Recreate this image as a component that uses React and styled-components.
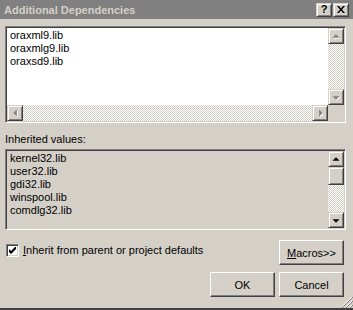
import styled, { createGlobalStyle, css } from "styled-components";

const Global = createGlobalStyle`
  html, body { margin: 0; padding: 0; background: #d4d0c8; }
  body { font-family: "Liberation Sans", Arial, sans-serif; font-size: 11px; color: #000; }
`;

const raised = css`
  box-sizing: border-box;
  border: 1px solid;
  border-color: #d4d0c8 #404040 #404040 #d4d0c8;
  box-shadow: inset 1px 1px #fff, inset -1px -1px #808080;
  background: #d4d0c8;
`;

const sunken = css`
  box-sizing: border-box;
  border: 1px solid;
  border-color: #808080 #fff #fff #808080;
  box-shadow: inset 1px 1px #404040, inset -1px -1px #d4d0c8;
`;

const Dialog = styled.div`
  width: 353px; height: 310px; box-sizing: border-box;
  display: flex; flex-direction: column;
  background: #d4d0c8; position: relative;
  border-bottom: 2px solid #404040;
`;

const TitleBar = styled.div`
  height: 19px; flex: none; background: #808080;
  display: flex; align-items: center; gap: 1px;
  padding: 0 4px 0 4px;
`;

const Title = styled.div`
  flex: 1; font-weight: bold; color: #d4d0c8; font-size: 11px;
`;

const CapBtn = styled.div`
  ${raised};
  width: 16px; height: 14px;
  display: flex; align-items: center; justify-content: center;
  font-weight: bold; font-size: 11px; line-height: 1;
`;

const Body = styled.div`
  flex: 1; display: flex; flex-direction: column;
  padding: 7px 7px 0 5px;
`;

const ListBox = styled.div`
  ${sunken};
  height: ${(p) => p.$h}px; padding: 1px;
  background: ${(p) => (p.$disabled ? "#d4d0c8" : "#fff")};
  display: grid;
  grid-template-columns: 1fr 16px;
  grid-template-rows: ${(p) => (p.$hscroll ? "1fr 16px" : "1fr")};
`;

const Lines = styled.div`
  padding: 1px 3px; line-height: 13px; overflow: hidden;
`;

const VScroll = styled.div`
  display: flex; flex-direction: column;
`;

const HScroll = styled.div`
  display: flex;
`;

const Track = styled.div`
  flex: 1;
  background: repeating-conic-gradient(#fff 0 25%, #d4d0c8 0 50%) 0 0 / 2px 2px;
`;

const ArrowBtn = styled.div`
  ${raised};
  width: 16px; height: 16px; flex: none;
  display: flex; align-items: center; justify-content: center;
`;

const Thumb = styled.div`
  ${raised};
  height: 18px; flex: none;
`;

const Corner = styled.div`
  background: #d4d0c8;
`;

const Label = styled.div`
  margin: 10px 0 3px; line-height: 13px;
`;

const OptionRow = styled.div`
  margin-top: 10px; margin-right: 2px;
  display: flex; justify-content: space-between; align-items: flex-start;
`;

const CheckRow = styled.label`
  display: flex; align-items: center; gap: 4px;
  margin: 4px 0 0 1px; line-height: 13px;
`;

const CheckBox = styled.span`
  ${sunken};
  width: 13px; height: 13px; background: #fff;
  display: flex; align-items: center; justify-content: center;
`;

const ButtonRow = styled.div`
  margin-top: 7px; margin-right: 2px;
  display: flex; justify-content: flex-end; gap: 4px;
`;

const Button = styled.div`
  box-sizing: border-box;
  width: 65px; height: 25px;
  border: 1px solid; border-color: #fff #404040 #404040 #fff;
  box-shadow: inset -1px -1px #808080;
  display: flex; align-items: center; justify-content: center;
`;

const Grip = styled.svg`
  position: absolute; right: 0; bottom: 0;
`;

const Arrow = ({ dir, disabled }) => {
  const pts = {
    up: "4,6 8,2 12,6",
    down: "4,3 8,7 12,3",
    left: "6,4 2,8 6,12",
    right: "3,4 7,8 3,12",
  }[dir];
  const box = dir === "up" || dir === "down" ? "0 0 16 9" : "0 0 9 16";
  const w = dir === "up" || dir === "down" ? 14 : 9;
  const h = dir === "up" || dir === "down" ? 9 : 14;
  return (
    <svg width={w} height={h} viewBox={box}>
      {disabled && <polygon points={pts} fill="#fff" transform="translate(1 1)" />}
      <polygon points={pts} fill={disabled ? "#808080" : "#000"} />
    </svg>
  );
};

export default function App() {
  return (
    <>
      <Global />
      <Dialog>
        <TitleBar>
          <Title>Additional Dependencies</Title>
          <CapBtn>?</CapBtn>
          <CapBtn>
            <svg width="8" height="7" viewBox="0 0 8 7">
              <path d="M0 0h2l2 2.5L6 0h2L5 3.5 8 7H6L4 4.5 2 7H0l3-3.5z" fill="#000" />
            </svg>
          </CapBtn>
        </TitleBar>
        <Body>
          <ListBox $h={97} $hscroll>
            <Lines>
              <div>oraxml9.lib</div>
              <div>oraxmlg9.lib</div>
              <div>oraxsd9.lib</div>
            </Lines>
            <VScroll>
              <ArrowBtn><Arrow dir="up" disabled /></ArrowBtn>
              <Track />
              <ArrowBtn><Arrow dir="down" disabled /></ArrowBtn>
            </VScroll>
            <HScroll>
              <ArrowBtn><Arrow dir="left" disabled /></ArrowBtn>
              <Track />
              <ArrowBtn><Arrow dir="right" disabled /></ArrowBtn>
            </HScroll>
            <Corner />
          </ListBox>
          <Label>Inherited values:</Label>
          <ListBox $h={81} $disabled>
            <Lines>
              <div>kernel32.lib</div>
              <div>user32.lib</div>
              <div>gdi32.lib</div>
              <div>winspool.lib</div>
              <div>comdlg32.lib</div>
            </Lines>
            <VScroll>
              <ArrowBtn><Arrow dir="up" /></ArrowBtn>
              <Thumb />
              <Track />
              <ArrowBtn><Arrow dir="down" /></ArrowBtn>
            </VScroll>
          </ListBox>
          <OptionRow>
            <CheckRow>
              <CheckBox>
                <svg width="7" height="7" viewBox="0 0 7 7">
                  <path d="M0 2v3l2 2 5-5V-1L2 4z" fill="#000" />
                </svg>
              </CheckBox>
              <span><u>I</u>nherit from parent or project defaults</span>
            </CheckRow>
            <Button><span><u>M</u>acros&gt;&gt;</span></Button>
          </OptionRow>
          <ButtonRow>
            <Button>OK</Button>
            <Button>Cancel</Button>
          </ButtonRow>
        </Body>
        <Grip width="12" height="12" viewBox="0 0 12 12">
          <path d="M11 1L1 11M11 5L5 11M11 9L9 11" stroke="#fff" />
          <path d="M12 1L1 12M12 5L5 12M12 9L9 12" stroke="#808080" transform="translate(0 0)" />
        </Grip>
      </Dialog>
    </>
  );
}
